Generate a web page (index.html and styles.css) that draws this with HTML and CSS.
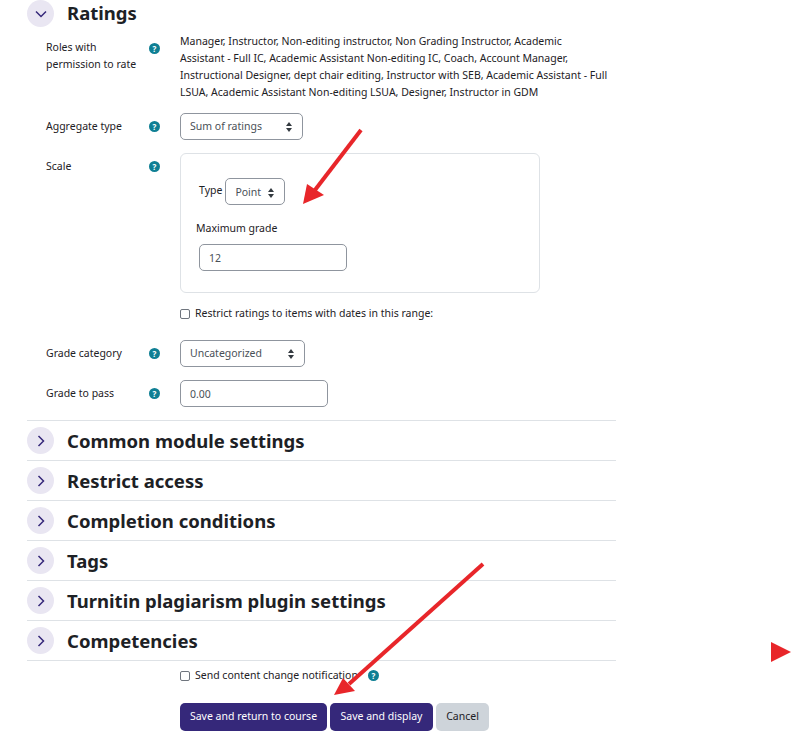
FILE: index.html
```html
<!DOCTYPE html>
<html lang="en">
<head>
    <meta charset="UTF-8">
    <title>Edit settings</title>
    <link rel="stylesheet" href="styles.css">
</head>
<body>
    <form class="settings-form">
        <section class="ratings">
            <div class="section-head">
                <span class="toggle"><svg width="12" height="12" viewBox="0 0 12 12"><path d="M1 3.5l5 5 5-5" /></svg></span>
                <h3>Ratings</h3>
            </div>

            <div class="row row-roles">
                <label class="row-label">Roles with permission to rate</label>
                <span class="help">?</span>
                <p class="roles-text">Manager, Instructor, Non-editing instructor, Non Grading Instructor, Academic<br>Assistant - Full IC, Academic Assistant Non-editing IC, Coach, Account Manager,<br>Instructional Designer, dept chair editing, Instructor with SEB, Academic Assistant - Full<br>LSUA, Academic Assistant Non-editing LSUA, Designer, Instructor in GDM</p>
            </div>

            <div class="row row-aggregate">
                <label class="row-label">Aggregate type</label>
                <span class="help">?</span>
                <div class="select select-aggregate">Sum of ratings<span class="updown"></span></div>
            </div>

            <div class="row row-scale">
                <label class="row-label">Scale</label>
                <span class="help">?</span>
                <div class="scale-box">
                    <div class="scale-type">
                        <span class="type-label">Type</span>
                        <div class="select select-point">Point<span class="updown"></span></div>
                    </div>
                    <div class="max-label">Maximum grade</div>
                    <div class="text-input input-max">12</div>
                </div>
            </div>

            <div class="check-row check-restrict">
                <span class="checkbox"></span>
                <span>Restrict ratings to items with dates in this range:</span>
            </div>

            <div class="row row-category">
                <label class="row-label">Grade category</label>
                <span class="help">?</span>
                <div class="select select-category">Uncategorized<span class="updown"></span></div>
            </div>

            <div class="row row-pass">
                <label class="row-label">Grade to pass</label>
                <span class="help">?</span>
                <div class="text-input input-pass">0.00</div>
            </div>
        </section>

        <section class="collapsed">
            <div class="section-head">
                <span class="toggle"><svg width="12" height="12" viewBox="0 0 12 12"><path d="M3.5 1l5 5-5 5" /></svg></span>
                <h3>Common module settings</h3>
            </div>
        </section>
        <section class="collapsed">
            <div class="section-head">
                <span class="toggle"><svg width="12" height="12" viewBox="0 0 12 12"><path d="M3.5 1l5 5-5 5" /></svg></span>
                <h3>Restrict access</h3>
            </div>
        </section>
        <section class="collapsed">
            <div class="section-head">
                <span class="toggle"><svg width="12" height="12" viewBox="0 0 12 12"><path d="M3.5 1l5 5-5 5" /></svg></span>
                <h3>Completion conditions</h3>
            </div>
        </section>
        <section class="collapsed">
            <div class="section-head">
                <span class="toggle"><svg width="12" height="12" viewBox="0 0 12 12"><path d="M3.5 1l5 5-5 5" /></svg></span>
                <h3>Tags</h3>
            </div>
        </section>
        <section class="collapsed">
            <div class="section-head">
                <span class="toggle"><svg width="12" height="12" viewBox="0 0 12 12"><path d="M3.5 1l5 5-5 5" /></svg></span>
                <h3>Turnitin plagiarism plugin settings</h3>
            </div>
        </section>
        <section class="collapsed">
            <div class="section-head">
                <span class="toggle"><svg width="12" height="12" viewBox="0 0 12 12"><path d="M3.5 1l5 5-5 5" /></svg></span>
                <h3>Competencies</h3>
            </div>
        </section>

        <div class="check-row check-notify">
            <span class="checkbox"></span>
            <span>Send content change notification</span>
            <span class="help">?</span>
        </div>

        <div class="buttons">
            <button type="button" class="btn btn-primary btn-return">Save and return to course</button>
            <button type="button" class="btn btn-primary btn-display">Save and display</button>
            <button type="button" class="btn btn-cancel">Cancel</button>
        </div>
    </form>

    <!-- red annotations drawn on top of the screenshot -->
    <svg class="annotations" width="791" height="746" viewBox="0 0 791 746">
        <path d="M361 130L315 190" class="arrow-line" />
        <polygon points="303,204 307,184 324,195" class="arrow-head" />
        <path d="M483 564L349 684" class="arrow-line" />
        <polygon points="334,695 343,678 355,691" class="arrow-head" />
        <polygon points="771,642 791,652 771,662" class="arrow-head" />
    </svg>
</body>
</html>
```

FILE: styles.css
```css
body {
    margin: 0;
    height: 746px;
    overflow: hidden;
    background: #fff;
    color: #1d2125;
    font-family: "Noto Sans", sans-serif;
    font-size: 10.5px;
    line-height: 17px;
    position: relative;
}

.settings-form {
    width: 589px;
    margin-left: 27px;
}

/* section headers */
.section-head {
    display: flex;
    align-items: center;
    height: 27px;
}

.section-head h3 {
    margin: 0 0 0 13px;
    font-size: 18.5px;
    font-weight: 700;
    line-height: 27px;
}

.ratings .section-head h3 {
    margin-top: -2px;
}

.toggle {
    display: flex;
    align-items: center;
    justify-content: center;
    width: 27px;
    height: 27px;
    border-radius: 50%;
    background: #e9e6f2;
}

.toggle path {
    fill: none;
    stroke: #35287a;
    stroke-width: 1.5;
}

.ratings {
    height: 420px;
    border-bottom: 1px solid #dee2e6;
}

.collapsed {
    box-sizing: border-box;
    height: 40px;
    padding-top: 6px;
    border-bottom: 1px solid #dee2e6;
}

/* form rows */
.row {
    display: flex;
    align-items: flex-start;
    padding-left: 19px;
}

.row-label {
    width: 103px;
    flex-shrink: 0;
}

.row .help {
    margin-right: 20px;
}

.row-roles {
    margin-top: 6px;
}

.row-roles .row-label {
    padding-top: 6px;
}

.row-roles .help {
    margin-top: 10px;
}

.roles-text {
    margin: 0;
    white-space: nowrap;
}

.row-aggregate {
    margin-top: 12px;
    align-items: center;
}

.row-scale {
    margin-top: 13px;
}

.row-scale .row-label {
    padding-top: 5px;
}

.row-scale .help {
    margin-top: 8px;
}

.row-category {
    margin-top: 18px;
    align-items: center;
}

.row-pass {
    margin-top: 13px;
    align-items: center;
}

.help {
    display: inline-flex;
    align-items: center;
    justify-content: center;
    width: 11px;
    height: 11px;
    flex-shrink: 0;
    border-radius: 50%;
    background: #0f7f94;
    color: #fff;
    font-size: 8px;
    font-weight: 700;
    line-height: 11px;
}

/* controls */
.select,
.text-input {
    box-sizing: border-box;
    height: 27px;
    border: 1px solid #8f959e;
    border-radius: 5px;
    padding-left: 9px;
    color: #495057;
    background: #fff;
}

.text-input {
    line-height: 27px;
}

.select {
    display: flex;
    align-items: center;
    justify-content: space-between;
    padding-right: 9px;
}

.updown {
    width: 7px;
    height: 10px;
    position: relative;
}

.updown::before,
.updown::after {
    content: "";
    position: absolute;
    left: 0;
    border-left: 3.5px solid transparent;
    border-right: 3.5px solid transparent;
}

.updown::before {
    top: 0;
    border-bottom: 4px solid #343a40;
}

.updown::after {
    bottom: 0;
    border-top: 4px solid #343a40;
}

.select-aggregate {
    width: 123px;
}

.select-point {
    width: 60px;
    padding-top: 2px;
}

.select-category {
    width: 125px;
}

.input-max {
    width: 148px;
    margin-left: 18px;
}

.input-pass {
    width: 148px;
}

.scale-box {
    box-sizing: border-box;
    width: 360px;
    height: 140px;
    border: 1px solid #dee2e6;
    border-radius: 6px;
    padding-top: 24px;
}

.scale-type {
    display: flex;
    align-items: center;
    padding-left: 18px;
}

.type-label {
    margin-right: 3px;
    margin-top: -2px;
}

.max-label {
    margin: 15px 0 7px 15px;
}

/* checkbox rows */
.check-row {
    display: flex;
    align-items: center;
    padding-left: 153px;
}

.checkbox {
    box-sizing: border-box;
    width: 10px;
    height: 10px;
    border: 1px solid #6f757e;
    border-radius: 2px;
    margin-right: 5px;
}

.check-restrict {
    margin-top: 12px;
}

.check-notify {
    margin-top: 6px;
}

.check-notify .help {
    margin-left: 10px;
}

/* buttons */
.buttons {
    display: flex;
    gap: 3px;
    padding-left: 153px;
    margin-top: 19px;
}

.btn {
    height: 28px;
    border: none;
    border-radius: 5px;
    padding: 0 0 2px;
    font-family: inherit;
    font-size: 10.5px;
}

.btn-primary {
    background: #35287a;
    color: #fff;
}

.btn-return {
    width: 147px;
}

.btn-display {
    width: 103px;
}

.btn-cancel {
    width: 53px;
    background: #ced4da;
    color: #1d2125;
}

/* annotations */
.annotations {
    position: absolute;
    left: 0;
    top: 0;
    pointer-events: none;
}

.arrow-line {
    fill: none;
    stroke: #e8262a;
    stroke-width: 4;
}

.arrow-head {
    fill: #e8262a;
}
```
